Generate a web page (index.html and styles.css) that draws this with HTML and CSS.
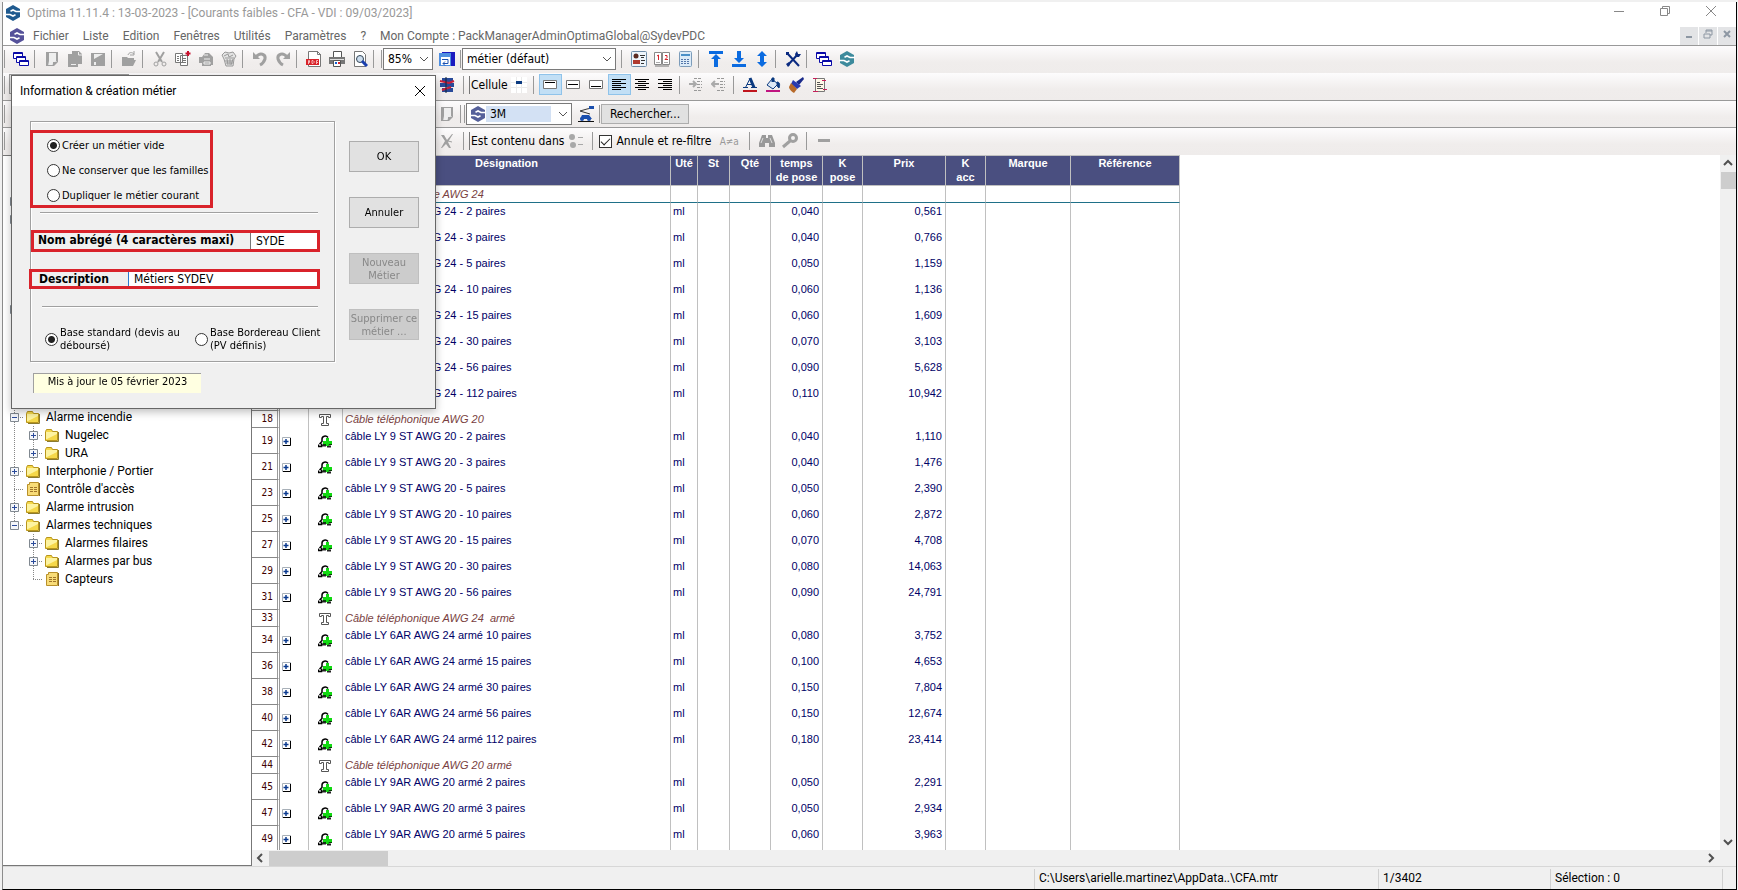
FILE: index.html
```html
<!DOCTYPE html>
<html lang="fr">
<head>
    <meta charset="UTF-8">
    <meta name="viewport" content="width=device-width, initial-scale=1.0">
    <title>Optima 11.11.4</title>
    <link rel="stylesheet" href="styles.css">
</head>
<body>
    <svg class="sprite" aria-hidden="true">
        <symbol id="logo" viewBox="0 0 16 16"><path d="M8 0l7 4v8l-7 4-7-4V4z" fill="currentColor"/><path d="M16 6.500h-5L8 5 5.500 6.200M0 9.500h5L8 11l2.500-1.200" fill="none" stroke="#fff" stroke-width="1.600"/></symbol>
        <symbol id="windows" viewBox="0 0 16 16"><g fill="#fff" stroke="#0a0aa8"><path d="M.5 1.500h9v6h-9zM.5 2.500h9"/><path d="M3.500 5.500h9v6h-9zM3.500 6.500h9"/><path d="M6.500 9.500h9v5h-9zM6.500 10.500h9"/></g></symbol>
        <symbol id="new" viewBox="0 0 16 16"><path d="M2.500 1.500h11v9l-4 4h-7z" fill="#eee" stroke="#a0a0a0"/><path d="M2 1h3v9l-1 5H2zM8 15c1-1 1-3 1-4 2 0 4 0 5-2v2l-4 4z" fill="#a0a0a0"/><path d="M13 1v9" stroke="#a0a0a0" stroke-width="2"/></symbol>
        <symbol id="pages" viewBox="0 0 16 16"><path d="M5 0h7l3 3v10h-4v3H1V3h4z" fill="#a0a0a0"/><path d="M4 13.500h5M11.500 1v3H15" stroke="#eee" fill="none"/></symbol>
        <symbol id="save" viewBox="0 0 16 16"><path d="M1 2h14v13H1z" fill="#a0a0a0"/><path d="M4 3h9L4 8zM4 11h2v3H4z" fill="#eee"/></symbol>
        <symbol id="open" viewBox="0 0 16 16"><path d="M1 6h5l1 1h6v2h2l-3 6H1z" fill="#a0a0a0"/><path d="M7 4c1-3 4-3 6-1M13 0v4H9" stroke="#a0a0a0" fill="none"/></symbol>
        <symbol id="cut" viewBox="0 0 16 16"><path d="M4 1l6 10M12 1L6 11" stroke="#a0a0a0" stroke-width="2" fill="none"/><circle cx="4" cy="13" r="2" fill="none" stroke="#a0a0a0"/><circle cx="12" cy="13" r="2" fill="none" stroke="#a0a0a0"/></symbol>
        <symbol id="copy" viewBox="0 0 16 16"><path d="M.5 2.500h7v9h-7zM5.500 4.500h7v10h-7z" fill="#fff" stroke="#777"/><path d="M2 5.500h2M2 7.500h2M2 9.500h2M7 7.500h4M7 9.500h4M7 11.500h4" stroke="#777"/><path d="M13 0v5M10.500 2.500h5" stroke="#c8102e" stroke-width="2"/></symbol>
        <symbol id="paste" viewBox="0 0 16 16"><path d="M1 6h3l3-4 4 0 4 4v8h-2v1H4v-3H1z" fill="#a0a0a0"/><path d="M6 8h6M6 11h6v2H6zM6 4h4" stroke="#eee" fill="none"/></symbol>
        <symbol id="trash" viewBox="0 0 16 16"><path d="M1 4l3-3 4 1 4-1 3 4-2 3-1 7H5L3 8z" fill="#e4e4e4" stroke="#999"/><path d="M3 5l4-2 1 3 4-2M4 7h9M6 8l1 6M9 8v6M12 8l-2 6M4 10h8M5 12h7" stroke="#999" fill="none"/></symbol>
        <symbol id="undo" viewBox="0 0 16 16"><path d="M4 6c4-5 10-3 9 2-1 3-3 5-5 6" stroke="#a0a0a0" stroke-width="3" fill="none"/><path d="M1 1v7h7z" fill="#a0a0a0"/></symbol>
        <symbol id="redo" viewBox="0 0 16 16"><path d="M12 6C8 1 2 3 3 8c1 3 3 5 5 6" stroke="#a0a0a0" stroke-width="3" fill="none"/><path d="M15 1v7H8z" fill="#a0a0a0"/></symbol>
        <symbol id="pdf" viewBox="0 0 16 16"><path d="M2.500.5h9l3 3v12h-12z" fill="#fff" stroke="#777"/><path d="M11.500 0v3.500H15" fill="none" stroke="#777"/><path d="M0 8h13v6H0z" fill="#d8232a"/><path d="M2.500 13V9.500h1v2h-1M6 12.500v-3h1l1 1v1l-1 1zM10.500 13V9.500H12M10.500 11.500H12" stroke="#f6b8ba" fill="none"/></symbol>
        <symbol id="print" viewBox="0 0 16 16"><path d="M4.500.5h8v6h-8z" fill="#fff" stroke="#555"/><path d="M0 6h16v7H0z" fill="#777"/><path d="M1 8.500h14" stroke="#ddd"/><path d="M4.500 9.500h7v6h-7z" fill="#fff" stroke="#555"/><path d="M6 12h2" stroke="#1560d0" stroke-width="2"/><path d="M9 12h2" stroke="#d8232a" stroke-width="2"/></symbol>
        <symbol id="preview" viewBox="0 0 16 16"><path d="M2.500.5h8l3 3v12h-11z" fill="#fff" stroke="#777"/><circle cx="8" cy="8" r="3.500" fill="#cde" stroke="#345"/><path d="M10 10l5 5" stroke="#1a3fae" stroke-width="3"/></symbol>
        <symbol id="disk" viewBox="0 0 16 16"><path d="M3 1h13v14H3z" fill="#1a1ac0"/><path d="M0 2h12v13H0z" fill="#4f8fe0"/><path d="M2 6h9v8H2z" fill="#fff"/><path d="M3 8.500h6v4H4l2-2M4 12.500l2 2" stroke="#1a50b0" fill="none"/></symbol>
        <symbol id="contact" viewBox="0 0 16 16"><rect x=".5" y=".5" width="15" height="15" rx="1" fill="#eef5fb" stroke="#6f8da8"/><circle cx="5" cy="5" r="2.500" fill="#5b2a20"/><path d="M2 13V9h7v4z" fill="#b03a30"/><path d="M9 4.500h5M10 6.500h3M10 9.500h4M10 12.500h3" stroke="#333"/></symbol>
        <symbol id="book" viewBox="0 0 16 16"><path d="M.5 1.500h7v12h-7zM8.500 1.500h7v12h-7z" fill="#fff" stroke="#888"/><path d="M1 15h14" stroke="#777"/><path d="M3 5l1.500-1v5M11 4.500h2v2l-2 2h3" stroke="#d8232a" fill="none"/><path d="M2 11.500h4M10 11.500h4" stroke="#aaa"/></symbol>
        <symbol id="calc" viewBox="0 0 16 16"><rect x="2.500" y=".5" width="12" height="15" rx="1" fill="#dcebf8" stroke="#7d9cba"/><path d="M4 3h9v2H4z" fill="#4a90c8"/><path d="M4 8.500h9M4 10.500h9M4 12.500h9" stroke="#57a" stroke-dasharray="2 1"/></symbol>
        <symbol id="top" viewBox="0 0 16 16"><path d="M1 0h14v3H1zM8 3l5 5h-3v8H6V8H3z" fill="#0b6be0"/></symbol>
        <symbol id="bottom" viewBox="0 0 16 16"><path d="M1 13h14v3H1zM8 12l5-5h-3V0H6v7H3z" fill="#0b6be0"/></symbol>
        <symbol id="updown" viewBox="0 0 16 16"><path d="M8 0l5 5h-3v6h3l-5 5-5-5h3V5H3z" fill="#0b6be0"/></symbol>
        <symbol id="tools" viewBox="0 0 16 16"><path d="M2 2l12 13M13 3L3 14" stroke="#0b2a80" stroke-width="2"/><path d="M1 1h3v3H1zM10 3l2-3 1 3 3 0-2 3h-3zM1 13l3-2 1 3-2 2z" fill="#0b2a80"/></symbol>
        <symbol id="fields" viewBox="0 0 16 16"><path d="M3 1h11v4H3zM1 6h14v4H1zM3 11h11v4H3z" fill="#284a9a"/><path d="M1 4l9 2 5-2M3 13l9-3" stroke="#c8203a" stroke-width="2" fill="none"/><path d="M7 0v16" stroke="#123"/></symbol>
        <symbol id="cell" viewBox="0 0 16 16"><path d="M0 0h16v16H0z" fill="#fff"/><path d="M0 5.500h16M0 10.500h16M5.500 0v16M10.500 0v16" stroke="#eaeaea"/><path d="M5 4h6v3H5z" fill="#0b3a80"/></symbol>
        <symbol id="valign-top" viewBox="0 0 16 16"><path d="M1.500 3.500h13v8h-13z" fill="#fff" stroke="#777"/><path d="M3 6l1-1 1 1 1-1 1 1 1-1 1 1 1-1 1 1 1-1 1 1" stroke="#000" fill="none"/></symbol>
        <symbol id="valign-mid" viewBox="0 0 16 16"><path d="M1.500 3.500h13v8h-13z" fill="#fff" stroke="#777"/><path d="M3 8l1-1 1 1 1-1 1 1 1-1 1 1 1-1 1 1 1-1 1 1" stroke="#000" fill="none"/></symbol>
        <symbol id="valign-bot" viewBox="0 0 16 16"><path d="M1.500 3.500h13v8h-13z" fill="#fff" stroke="#777"/><path d="M3 10l1-1 1 1 1-1 1 1 1-1 1 1 1-1 1 1 1-1 1 1" stroke="#000" fill="none"/></symbol>
        <symbol id="left" viewBox="0 0 16 16"><path d="M1 2.500h14M1 4.500h9M1 6.500h14M1 8.500h9M1 10.500h14M1 12.500h9" stroke="#000"/></symbol>
        <symbol id="center" viewBox="0 0 16 16"><path d="M1 2.500h14M4 4.500h8M1 6.500h14M4 8.500h8M1 10.500h14M4 12.500h8" stroke="#000"/></symbol>
        <symbol id="right" viewBox="0 0 16 16"><path d="M1 2.500h14M6 4.500h9M1 6.500h14M6 8.500h9M1 10.500h14M6 12.500h9" stroke="#000"/></symbol>
        <symbol id="indent" viewBox="0 0 16 16"><path d="M6 1.500h8M9 4.500h5M9 7.500h5M9 10.500h5M6 13.500h8" stroke="#999" stroke-dasharray="3 1"/><path d="M1 7h6M5 4l3 3-3 3" stroke="#aaa" stroke-width="2" fill="none"/></symbol>
        <symbol id="outdent" viewBox="0 0 16 16"><path d="M6 1.500h8M9 4.500h5M9 7.500h5M9 10.500h5M6 13.500h8" stroke="#999" stroke-dasharray="3 1"/><path d="M8 7H2M4 4L1 7l3 3" stroke="#aaa" stroke-width="2" fill="none"/></symbol>
        <symbol id="color" viewBox="0 0 16 16"><path d="M3.500 10.500L8 1.500M5 7.500h6M1 10.500h5M9 10.500h6" stroke="#0b3a80" fill="none"/><path d="M8 1l4 9.500" stroke="#0b3a80" stroke-width="3"/><path d="M1 13h14v2H1z" fill="#c0141c"/></symbol>
        <symbol id="fill" viewBox="0 0 16 16"><path d="M7 2l6 5-5 5-6-4z" fill="#dde8f5" stroke="#0b3a80"/><path d="M7 5V1h2v4M12 5c3 0 3 3 2 6-2-1-2-3-2-6z" fill="#0b3a80" stroke="#0b3a80"/><path d="M1 13h14v2H1z" fill="#c01480"/></symbol>
        <symbol id="brush" viewBox="0 0 16 16"><path d="M15 0l1 2-5 6-3-3z" fill="#1a2a8a"/><path d="M5 3l8 6-4 3-6-5z" fill="#2a3ab0"/><path d="M3 6l6 6-3 4c-2-1-5-4-5-6z" fill="#b86a2a"/></symbol>
        <symbol id="report" viewBox="0 0 16 16"><path d="M4.500 1.500h9v13h-9z" fill="#fff8e8" stroke="#777"/><path d="M2 1.500h4M11 3.500h4M2 14.500h5M12 12.500h4" stroke="#c8205a"/><path d="M6 5.500h3M6 7.500h6M6 9.500h4M6 11.500h6" stroke="#555"/></symbol>
        <symbol id="chart" viewBox="0 0 16 16"><path d="M14 2L9 3 2 5l10 3" stroke="#333" fill="none"/><path d="M11 0h5v3h-5zM4 9h7l3 4H2z" fill="#1a4fae"/><circle cx="4" cy="13" r="2" fill="#1a4fae"/><circle cx="11" cy="13" r="2" fill="#1a4fae"/><path d="M0 15.500h16" stroke="#111"/></symbol>
        <symbol id="nofilter" viewBox="0 0 16 16"><path d="M2 2h3l3 5 5-6h1L9 9l3 6h-2l-3-4-4 4H2l4-7z" fill="#a0a0a0"/><path d="M9 8l4 1" stroke="#a0a0a0"/></symbol>
        <symbol id="options" viewBox="0 0 16 16"><circle cx="4" cy="4" r="3" fill="#a8a8a8"/><circle cx="5" cy="12" r="3" fill="#a8a8a8"/><path d="M10 4.500h5M10 11.500h5" stroke="#a8a8a8"/></symbol>
        <symbol id="binoculars" viewBox="0 0 16 16"><path d="M3 2h4v3h2V2h4l3 8v4h-6v-4H6v4H0v-4z" fill="#999"/><path d="M4 5l-2 5M11 5l2 5" stroke="#ddd"/></symbol>
        <symbol id="key" viewBox="0 0 16 16"><circle cx="11" cy="5" r="3.500" fill="none" stroke="#a0a0a0" stroke-width="3"/><path d="M8 8l-7 6" stroke="#a0a0a0" stroke-width="3"/></symbol>
        <symbol id="minus" viewBox="0 0 16 16"><path d="M2 6h12v3H2z" fill="#a0a0a0"/></symbol>
        <symbol id="chevron" viewBox="0 0 10 10"><path d="M1 3l4 4 4-4" stroke="#555" fill="none"/></symbol>
        <symbol id="folder" viewBox="0 0 16 16"><path d="M1.500 4.500l1-2h5l1 2h5v9h-12z" fill="#f5d84a" stroke="#b8951c"/><path d="M2 5h11v2L3 12H2z" fill="#fdf3a0"/><path d="M14.500 5v9.500H3" stroke="#8a7a30" fill="none"/></symbol>
        <symbol id="sheet" viewBox="0 0 16 16"><path d="M2.500 3.500h2v-2h9v13h-11z" fill="#f8dc78" stroke="#b8902a"/><path d="M5 6.500h3M9 6.500h3M5 8.500h3M9 8.500h3M5 10.500h3M9 10.500h3" stroke="#a0742a"/><path d="M14.500 2v13" stroke="#8a6a20"/></symbol>
        <symbol id="heading" viewBox="0 0 14 14"><path d="M1.500 4.500v-3h11v3h-2v-1h-2v7h2v2h-7v-2h2v-7h-2v1z" fill="#fff" stroke="#555"/></symbol>
        <symbol id="article" viewBox="0 0 14 14"><path d="M.5 10.500v2h3v-3M1.500 10L4 7.500V5c0-3 4-4 6-1.500" stroke="#000" stroke-width="1.500" fill="none"/><path d="M4 11.500h4M9 12.500h4" stroke="#222" stroke-width="2"/><path d="M8 4h3v3h3v3h-3v2H8v-2H5V7h3z" fill="#12d912"/><path d="M5 10.500h3M11 11.500v-1h3" stroke="#064006" fill="none"/></symbol>
        <symbol id="plus" viewBox="0 0 9 9"><path d="M.5.5h8v8h-8z" fill="#f4f6fa" stroke="#808890"/><path d="M2 4.500h5M4.500 2v5" stroke="#2a4a9a"/></symbol>
        <symbol id="less" viewBox="0 0 9 9"><path d="M.5.5h8v8h-8z" fill="#f4f6fa" stroke="#808890"/><path d="M2 4.500h5" stroke="#2a4a9a"/></symbol>
        <symbol id="rowplus" viewBox="0 0 9 9"><path d="M.5.5h8v8h-8z" fill="#fff" stroke="#a8b0b8"/><path d="M8.500 1v7.500H1" stroke="#000" fill="none"/><path d="M1.500 4.500h5M4 2v5" stroke="#0a3a90" stroke-width="1.500"/></symbol>
        <symbol id="close" viewBox="0 0 12 12"><path d="M1 1l10 10M11 1L1 11" stroke="currentColor" fill="none"/></symbol>
        <symbol id="restore" viewBox="0 0 12 12"><path d="M1.500 3.500h7v7h-7zM3.500 3V1.500h7v7H9" stroke="currentColor" fill="none"/></symbol>
        <symbol id="minimize" viewBox="0 0 12 12"><path d="M1 6.500h10" stroke="currentColor"/></symbol>
    </svg>

    <div class="window">
        <header class="titlebar">
            <svg class="logo"><use href="#logo"/></svg>
            <h1>Optima 11.11.4 : 13-03-2023 - [Courants faibles - CFA - VDI : 09/03/2023]</h1>
            <div class="window-buttons">
                <button aria-label="Réduire"><svg><use href="#minimize"/></svg></button>
                <button aria-label="Restaurer"><svg><use href="#restore"/></svg></button>
                <button aria-label="Fermer"><svg><use href="#close"/></svg></button>
            </div>
        </header>

        <nav class="menubar">
            <svg class="logo violet"><use href="#logo"/></svg>
            <a href="#">Fichier</a>
            <a href="#">Liste</a>
            <a href="#">Edition</a>
            <a href="#">Fenêtres</a>
            <a href="#">Utilités</a>
            <a href="#">Paramètres</a>
            <a href="#">?</a>
            <a href="#">Mon Compte : PackManagerAdminOptimaGlobal@SydevPDC</a>
            <div class="mdi-buttons">
                <button aria-label="Réduire la liste"><svg><path d="M3 9h6" stroke-width="2"/></svg></button>
                <button aria-label="Restaurer la liste"><svg><path d="M2 6h6v4H2zM4 5V2h6v5H8M4 3h6" /></svg></button>
                <button aria-label="Fermer la liste"><svg><path d="M3 3l6 6M9 3l-6 6" stroke-width="2"/></svg></button>
            </div>
        </nav>

        <div class="toolbar">
            <span class="grip"></span>
            <button class="tool" aria-label="Fenêtres"><svg><use href="#windows"/></svg></button>
            <span class="sep"></span>
            <button class="tool" aria-label="Nouveau"><svg><use href="#new"/></svg></button>
            <button class="tool" aria-label="Dupliquer"><svg><use href="#pages"/></svg></button>
            <button class="tool" aria-label="Enregistrer"><svg><use href="#save"/></svg></button>
            <span class="sep"></span>
            <button class="tool" aria-label="Ouvrir"><svg><use href="#open"/></svg></button>
            <span class="sep"></span>
            <button class="tool" aria-label="Couper"><svg><use href="#cut"/></svg></button>
            <button class="tool" aria-label="Copier"><svg><use href="#copy"/></svg></button>
            <button class="tool" aria-label="Coller"><svg><use href="#paste"/></svg></button>
            <button class="tool" aria-label="Supprimer"><svg><use href="#trash"/></svg></button>
            <span class="sep"></span>
            <button class="tool" aria-label="Annuler l'action"><svg><use href="#undo"/></svg></button>
            <button class="tool" aria-label="Rétablir"><svg><use href="#redo"/></svg></button>
            <span class="sep"></span>
            <button class="tool" aria-label="PDF"><svg><use href="#pdf"/></svg></button>
            <button class="tool" aria-label="Imprimer"><svg><use href="#print"/></svg></button>
            <button class="tool" aria-label="Aperçu"><svg><use href="#preview"/></svg></button>
            <span class="sep"></span>
            <span class="sep tight"></span>
            <div class="combo zoom">
                <select aria-label="Zoom"><option>85%</option></select>
                <svg><use href="#chevron"/></svg>
            </div>
            <button class="tool" aria-label="Enregistrer la vue"><svg><use href="#disk"/></svg></button>
            <span class="sep tight"></span>
            <div class="combo view">
                <select aria-label="Vue"><option>métier (défaut)</option></select>
                <svg><use href="#chevron"/></svg>
            </div>
            <span class="sep wide"></span>
            <button class="tool" aria-label="Contacts"><svg><use href="#contact"/></svg></button>
            <button class="tool" aria-label="Catalogue"><svg><use href="#book"/></svg></button>
            <button class="tool" aria-label="Calculatrice"><svg><use href="#calc"/></svg></button>
            <span class="sep"></span>
            <button class="tool" aria-label="Début"><svg><use href="#top"/></svg></button>
            <button class="tool" aria-label="Fin"><svg><use href="#bottom"/></svg></button>
            <button class="tool" aria-label="Hauteur"><svg><use href="#updown"/></svg></button>
            <span class="sep"></span>
            <button class="tool" aria-label="Outils"><svg><use href="#tools"/></svg></button>
            <span class="sep"></span>
            <button class="tool" aria-label="Cascade"><svg><use href="#windows"/></svg></button>
            <button class="tool" aria-label="Sydev"><svg class="teal"><use href="#logo"/></svg></button>
        </div>

        <div class="toolbar ruled">
            <span class="grip"></span>
            <span class="covered"><button class="style-button" aria-label="Style"></button></span>
            <button class="tool" aria-label="Champs"><svg><use href="#fields"/></svg></button>
            <span class="sep wide"></span>
            <span class="tool-label">Cellule</span>
            <button class="tool" aria-label="Cellule"><svg><use href="#cell"/></svg></button>
            <span class="sep"></span>
            <button class="tool active" aria-label="Haut"><svg><use href="#valign-top"/></svg></button>
            <button class="tool" aria-label="Milieu"><svg><use href="#valign-mid"/></svg></button>
            <button class="tool" aria-label="Bas"><svg><use href="#valign-bot"/></svg></button>
            <button class="tool active" aria-label="Gauche"><svg><use href="#left"/></svg></button>
            <button class="tool" aria-label="Centre"><svg><use href="#center"/></svg></button>
            <button class="tool" aria-label="Droite"><svg><use href="#right"/></svg></button>
            <span class="sep"></span>
            <button class="tool" aria-label="Augmenter le retrait"><svg><use href="#indent"/></svg></button>
            <button class="tool" aria-label="Diminuer le retrait"><svg><use href="#outdent"/></svg></button>
            <span class="sep"></span>
            <button class="tool" aria-label="Couleur du texte"><svg><use href="#color"/></svg></button>
            <button class="tool" aria-label="Couleur de fond"><svg><use href="#fill"/></svg></button>
            <button class="tool" aria-label="Reproduire"><svg><use href="#brush"/></svg></button>
            <button class="tool" aria-label="Rapport"><svg><use href="#report"/></svg></button>
        </div>

        <div class="toolbar ruled">
            <span class="grip"></span>
            <span class="covered"></span>
            <button class="tool" aria-label="Nouvelle page"><svg><use href="#new"/></svg></button>
            <span class="sep tight"></span>
            <span class="sep tight"></span>
            <div class="combo brand">
                <svg class="brand-logo"><use href="#logo"/></svg>
                <select aria-label="Fournisseur"><option>3M</option></select>
                <svg><use href="#chevron"/></svg>
            </div>
            <button class="tool" aria-label="Graphique"><svg><use href="#chart"/></svg></button>
            <span class="sep tight"></span>
            <button class="search-button">Rechercher...</button>
        </div>

        <div class="toolbar">
            <span class="grip"></span>
            <span class="covered"></span>
            <button class="tool" aria-label="Retirer le filtre"><svg><use href="#nofilter"/></svg></button>
            <span class="sep wide"></span>
            <span class="tool-label">Est contenu dans</span>
            <button class="tool" aria-label="Options du filtre"><svg><use href="#options"/></svg></button>
            <span class="sep wide"></span>
            <label class="check"><input type="checkbox" checked>Annule et re-filtre</label>
            <button class="tool case">A≠a</button>
            <span class="sep"></span>
            <button class="tool" aria-label="Rechercher"><svg><use href="#binoculars"/></svg></button>
            <button class="tool" aria-label="Clé"><svg><use href="#key"/></svg></button>
            <span class="sep wide"></span>
            <button class="tool" aria-label="Retirer"><svg><use href="#minus"/></svg></button>
        </div>

        <main class="content">
            <aside class="tree" id="tree"></aside>

            <section class="grid">
                <div class="grid-row">
                    <div class="grid-view">
                        <table>
                            <colgroup>
                                <col class="c-num"><col class="c-exp"><col class="c-type"><col class="c-name"><col class="c-unit">
                                <col class="c-st"><col class="c-qty"><col class="c-time"><col class="c-k"><col class="c-price">
                                <col class="c-k"><col class="c-brand"><col class="c-ref">
                            </colgroup>
                            <thead>
                                <tr>
                                    <th></th><th></th><th></th><th>Désignation</th><th>Uté</th><th>St</th><th>Qté</th>
                                    <th>temps<br>de pose</th><th>K<br>pose</th><th>Prix</th><th>K<br>acc</th><th>Marque</th><th>Référence</th>
                                </tr>
                            </thead>
                            <tbody id="rows"></tbody>
                        </table>
                    </div>
                    <div class="vscroll">
                        <svg><path d="M1 7l4-4 4 4"/></svg>
                        <span class="thumb"></span>
                        <svg class="end"><path d="M1 3l4 4 4-4"/></svg>
                    </div>
                </div>
                <div class="hscroll">
                    <svg><path d="M7 1L3 5l4 4"/></svg>
                    <span class="thumb"></span>
                    <svg class="end"><path d="M3 1l4 4-4 4"/></svg>
                </div>
            </section>
        </main>

        <footer class="statusbar">
            <span class="path">C:\Users\arielle.martinez\AppData..\CFA.mtr</span>
            <span class="count">1/3402</span>
            <span class="count">Sélection : 0</span>
            <span class="corner"></span>
        </footer>
    </div>

    <form class="dialog" role="dialog" aria-labelledby="dialogTitle">
        <div class="dialog-title">
            <h2 id="dialogTitle">Information &amp; création métier</h2>
            <button type="button" aria-label="Fermer la fenêtre"><svg><use href="#close"/></svg></button>
        </div>
        <div class="dialog-body">
            <div class="dialog-main">
                <div class="group">
                    <div class="marked modes">
                        <label><input type="radio" name="mode" checked>Créer un métier vide</label>
                        <label><input type="radio" name="mode">Ne conserver que les familles</label>
                        <label><input type="radio" name="mode">Dupliquer le métier courant</label>
                    </div>
                    <hr>
                    <div class="marked field short">
                        <label for="shortName">Nom abrégé (4 caractères maxi)</label>
                        <input type="text" id="shortName" value="SYDE" maxlength="4">
                    </div>
                    <div class="marked field long">
                        <label for="description">Description</label>
                        <input type="text" id="description" value="Métiers SYDEV">
                    </div>
                    <hr>
                    <div class="bases">
                        <label><input type="radio" name="base" checked><span>Base standard (devis au déboursé)</span></label>
                        <label><input type="radio" name="base"><span>Base Bordereau Client (PV définis)</span></label>
                    </div>
                </div>
                <p class="updated">Mis à jour le 05 février 2023</p>
            </div>
            <div class="dialog-buttons">
                <button type="button">OK</button>
                <button type="button">Annuler</button>
                <button type="button" disabled>Nouveau Métier</button>
                <button type="button" disabled>Supprimer ce métier ...</button>
            </div>
        </div>
    </form>

    <script>
        const tree = document.getElementById('tree');
        const rows = document.getElementById('rows');

        // level, expander, icon, label
        const nodes = [
            [0, '', '', ''], [0, '', '', ''], [0, 'plus', '', ''], [0, 'plus', '', ''], [0, '', '', ''],
            [0, '', '', ''], [0, '', '', ''], [0, '', '', ''], [0, 'plus', '', ''], [0, '', '', ''],
            [0, '', '', ''], [0, '', '', ''], [0, '', '', ''], [0, '', '', ''],
            [0, 'less', 'folder', 'Alarme incendie'],
            [1, 'plus', 'folder', 'Nugelec'],
            [1, 'plus', 'folder', 'URA'],
            [0, 'plus', 'folder', 'Interphonie / Portier'],
            [0, '', 'sheet', "Contrôle d'accès"],
            [0, 'plus', 'folder', 'Alarme intrusion'],
            [0, 'less', 'folder', 'Alarmes techniques', 'last'],
            [1, 'plus', 'folder', 'Alarmes filaires', '', 'blank'],
            [1, 'plus', 'folder', 'Alarmes par bus', '', 'blank'],
            [1, '', 'sheet', 'Capteurs', 'last', 'blank']
        ];

        nodes.forEach(([level, expander, icon, label, last = '', parent = '']) => {
            let html = '';
            if (level) html += `<span class="branch ${parent}"></span>`;
            html += `<span class="branch node ${last}">`;
            if (expander) html += `<svg><use href="#${expander}"/></svg>`;
            html += '</span>';
            if (icon) html += `<svg class="node-icon"><use href="#${icon}"/></svg><a href="#">${label}</a>`;
            tree.insertAdjacentHTML('beforeend', `<div class="tree-row">${html}</div>`);
        });

        // number, designation, time, price (no time: title row)
        const items = [
            [1, 'Câble téléphonique AWG 24'],
            [2, 'câble LY 9 ST AWG 24 - 2 paires', '0,040', '0,561'],
            [4, 'câble LY 9 ST AWG 24 - 3 paires', '0,040', '0,766'],
            [6, 'câble LY 9 ST AWG 24 - 5 paires', '0,050', '1,159'],
            [8, 'câble LY 9 ST AWG 24 - 10 paires', '0,060', '1,136'],
            [10, 'câble LY 9 ST AWG 24 - 15 paires', '0,060', '1,609'],
            [12, 'câble LY 9 ST AWG 24 - 30 paires', '0,070', '3,103'],
            [14, 'câble LY 9 ST AWG 24 - 56 paires', '0,090', '5,628'],
            [16, 'câble LY 9 ST AWG 24 - 112 paires', '0,110', '10,942'],
            [18, 'Câble téléphonique AWG 20'],
            [19, 'câble LY 9 ST AWG 20 - 2 paires', '0,040', '1,110'],
            [21, 'câble LY 9 ST AWG 20 - 3 paires', '0,040', '1,476'],
            [23, 'câble LY 9 ST AWG 20 - 5 paires', '0,050', '2,390'],
            [25, 'câble LY 9 ST AWG 20 - 10 paires', '0,060', '2,872'],
            [27, 'câble LY 9 ST AWG 20 - 15 paires', '0,070', '4,708'],
            [29, 'câble LY 9 ST AWG 20 - 30 paires', '0,080', '14,063'],
            [31, 'câble LY 9 ST AWG 20 - 56 paires', '0,090', '24,791'],
            [33, 'Câble téléphonique AWG 24&nbsp; armé'],
            [34, 'câble LY 6AR AWG 24 armé 10 paires', '0,080', '3,752'],
            [36, 'câble LY 6AR AWG 24 armé 15 paires', '0,100', '4,653'],
            [38, 'câble LY 6AR AWG 24 armé 30 paires', '0,150', '7,804'],
            [40, 'câble LY 6AR AWG 24 armé 56 paires', '0,150', '12,674'],
            [42, 'câble LY 6AR AWG 24 armé 112 paires', '0,180', '23,414'],
            [44, 'Câble téléphonique AWG 20 armé'],
            [45, 'câble LY 9AR AWG 20 armé 2 paires', '0,050', '2,291'],
            [47, 'câble LY 9AR AWG 20 armé 3 paires', '0,050', '2,934'],
            [49, 'câble LY 9AR AWG 20 armé 5 paires', '0,060', '3,963']
        ];

        items.forEach(([num, name, time, price]) => {
            const article = time !== undefined;
            rows.insertAdjacentHTML('beforeend', `<tr class="${article ? 'article' : 'title'}">
                <td class="num">${num}</td>
                <td class="exp">${article ? '<svg><use href="#rowplus"/></svg>' : ''}</td>
                <td class="type"><svg><use href="#${article ? 'article' : 'heading'}"/></svg></td>
                <td>${name}</td><td>${article ? 'ml' : ''}</td><td></td><td></td>
                <td class="right">${time || ''}</td><td></td><td class="right">${price || ''}</td>
                <td></td><td></td><td></td>
            </tr>`);
        });

        const description = document.getElementById('description');
        description.focus();
        description.setSelectionRange(13, 13);
    </script>
</body>
</html>
```
FILE: styles.css
```css
* {
    box-sizing: border-box;
    margin: 0;
    padding: 0;
}
body {
    height: 100vh;
    overflow: hidden;
    padding: 2px 1px 0 2px;
    background: #f0f0f0;
    font-family: "DejaVu Sans Condensed", "DejaVu Sans", sans-serif;
    font-size: 12px;
    color: #000;
}
button, input, select {
    font: inherit;
    color: inherit;
}
button {
    border: none;
    background: none;
}
a {
    color: inherit;
    text-decoration: none;
}
.sprite {
    position: absolute;
    width: 0;
    height: 0;
}
.window {
    display: flex;
    flex-direction: column;
    height: 100%;
    background: #f0f0f0;
    border-left: 1px solid #8c8c8c;
    border-right: 1px solid #000;
    border-bottom: 1px solid #000;
}

/* title and menu */
.titlebar, .menubar {
    display: flex;
    align-items: center;
    background: #fff;
    font-family: Roboto, sans-serif;
}
.titlebar {
    height: 24px;
    padding: 0 2px 2px;
    color: #999;
}
.titlebar h1 {
    margin-left: 6px;
    font-size: 12px;
    font-weight: normal;
}
.logo {
    width: 16px;
    height: 16px;
    color: #1f5a8f;
}
.logo.violet {
    margin-right: 8px;
    color: #55519a;
}
.teal {
    color: #3d8a9c;
}
.window-buttons {
    display: flex;
    align-self: flex-start;
    margin-left: auto;
}
.window-buttons button {
    width: 46px;
    height: 20px;
    color: #888;
}
.window-buttons svg {
    width: 12px;
    height: 12px;
}
.menubar {
    height: 19px;
    padding-left: 6px;
    color: #666;
}
.menubar a {
    margin-right: 14px;
}
.mdi-buttons {
    display: flex;
    gap: 1px;
    margin-left: auto;
}
.mdi-buttons button {
    width: 18px;
    height: 18px;
    background: #e3e4e6;
}
.mdi-buttons svg {
    width: 12px;
    height: 12px;
    fill: none;
    stroke: #8d97a3;
}

/* toolbars */
.toolbar {
    display: flex;
    align-items: center;
    height: 27px;
    padding-bottom: 1px;
    background: linear-gradient(#fdfcfd, #f0edec 60%, #efeceb);
}
.menubar + .toolbar {
    height: 28px;
    padding-bottom: 2px;
    border-top: 1px solid #999;
}
.toolbar.ruled {
    border-bottom: 1px solid #999;
}
.menubar + .toolbar + .toolbar {
    height: 28px;
    padding-bottom: 4px;
}
.grip, .sep {
    flex: none;
    width: 1px;
    height: 18px;
    background: #999;
}
.grip {
    margin: 0 4px 0 1px;
}
.sep {
    margin: 0 5px 0 2px;
}
.sep.tight {
    margin: 0 1px 0 2px;
}
.sep.wide {
    margin: 0 5px;
}
.tool {
    flex: none;
    display: flex;
    align-items: center;
    justify-content: center;
    width: 23px;
    height: 21px;
}
.tool svg {
    width: 16px;
    height: 16px;
}
.tool.active {
    background: #c2dff5;
    border: 1px solid #8fc3ea;
}
.tool.case {
    width: 36px;
    color: #999;
    font-size: 10px;
}
.covered {
    flex: none;
    width: 426px;
}
.style-button {
    width: 120px;
    height: 20px;
    border: 1px solid #999;
    background: #e4e4e4;
}
.tool-label {
    padding-left: 1px;
    border-left: 1px solid #777;
    line-height: 18px;
    white-space: nowrap;
}
.combo {
    position: relative;
    display: flex;
    align-items: center;
    height: 22px;
    margin-right: 2px;
    background: #fff;
    border: 1px solid #7a7a7a;
}
.combo select {
    flex: 1;
    height: 18px;
    padding-left: 4px;
    border: none;
    background: none;
    appearance: none;
}
.combo svg:last-child {
    position: absolute;
    right: 3px;
    width: 10px;
    height: 10px;
    pointer-events: none;
}
.combo.zoom {
    width: 50px;
}
.combo.view {
    width: 154px;
    margin-right: 0;
}
.combo.brand {
    width: 106px;
    padding: 0 20px 0 3px;
}
.combo.brand select {
    height: 16px;
    background: #d3e1f4;
}
.brand-logo {
    width: 16px;
    height: 16px;
    color: #55609a;
}
.search-button {
    width: 88px;
    height: 20px;
    background: #e1e1e1;
    border: 1px solid #adadad;
}
.check {
    display: flex;
    align-items: center;
    gap: 4px;
    margin-left: 1px;
    white-space: nowrap;
}
.check input {
    width: 13px;
    height: 13px;
    appearance: none;
    border: 1px solid #333;
    background: #fff;
}
.check input:checked::before {
    content: "";
    display: block;
    width: 8px;
    height: 4px;
    margin: 2px 0 0 1px;
    border: solid #222;
    border-width: 0 0 1px 1px;
    transform: rotate(-45deg);
}

/* tree */
.content {
    flex: 1;
    min-height: 0;
    display: flex;
}
.tree {
    flex: none;
    width: 249px;
    padding-left: 2px;
    overflow: hidden;
    background: #fff;
    border: 1px solid #777;
    border-left: none;
    font-family: Roboto, sans-serif;
}
.tree-row {
    display: flex;
    align-items: center;
    height: 18px;
}
.tree-row a {
    line-height: 16px;
}
.branch {
    flex: none;
    display: flex;
    align-items: center;
    justify-content: center;
    width: 19px;
    height: 18px;
    background: repeating-linear-gradient(#888 0 1px, transparent 1px 2px) 9px 0 / 1px 100% no-repeat;
}
.branch.node {
    background:
        repeating-linear-gradient(#888 0 1px, transparent 1px 2px) 9px 0 / 1px 100% no-repeat,
        repeating-linear-gradient(90deg, #888 0 1px, transparent 1px 2px) 9px 9px / 10px 1px no-repeat;
}
.branch.last {
    background-size: 1px 50%, 10px 1px;
}
.branch.blank {
    background: none;
}
.branch svg {
    width: 9px;
    height: 9px;
}
.node-icon {
    width: 16px;
    height: 16px;
    margin: 0 5px 0 1px;
}

/* list */
.grid {
    flex: 1;
    min-width: 0;
    display: flex;
    flex-direction: column;
}
.grid-row {
    flex: 1;
    min-height: 0;
    display: flex;
}
.grid-view {
    flex: 1;
    overflow: hidden;
    background: #fff;
}
table {
    table-layout: fixed;
    width: 928px;
    border-collapse: separate;
    border-spacing: 0;
    font-family: "Liberation Sans", Arial, sans-serif;
    font-size: 11px;
    color: #000066;
}
.c-num { width: 28px; }
.c-exp { width: 29px; }
.c-type { width: 34px; }
.c-name { width: 328px; }
.c-unit { width: 27px; }
.c-st { width: 32px; }
.c-qty { width: 41px; }
.c-time { width: 52px; }
.c-k { width: 40px; }
.c-price { width: 83px; }
.c-brand { width: 85px; }
.c-ref { width: 109px; }
th {
    height: 31px;
    vertical-align: top;
    background: #4a4f80;
    border: solid #c0c0c0;
    border-width: 1px 1px 1px 0;
    color: #fff;
    line-height: 14px;
}
td {
    height: 26px;
    padding: 0 3px 0 2px;
    vertical-align: top;
    border-right: 1px solid #c0c0c0;
    line-height: 16px;
    white-space: nowrap;
}
.title td {
    height: 17px;
    color: #7a3f3f;
    font-style: italic;
}
tbody tr:first-child td {
    border-bottom: 1px solid #1f7088;
}
td.num {
    padding-right: 4px;
    vertical-align: middle;
    text-align: right;
    border-right: 3px double #999;
    border-bottom: 1px solid #888;
    font-family: "DejaVu Sans Condensed", "DejaVu Sans", sans-serif;
    font-size: 10px;
    font-style: normal;
    line-height: 14px;
    color: #400000;
}
td.exp, td.type {
    vertical-align: middle;
    line-height: 0;
}
td.type {
    text-align: center;
}
.exp svg {
    width: 9px;
    height: 9px;
}
.type svg {
    width: 14px;
    height: 14px;
}
td.right {
    text-align: right;
}

/* scrollbars */
.vscroll, .hscroll {
    flex: none;
    display: flex;
    align-items: center;
    background: #f0f0f0;
}
.vscroll {
    flex-direction: column;
    width: 16px;
    padding: 3px 0;
}
.hscroll {
    height: 16px;
    padding: 0 20px 0 3px;
}
.vscroll svg, .hscroll svg {
    width: 10px;
    height: 10px;
    fill: none;
    stroke: #505050;
    stroke-width: 2;
}
.vscroll .thumb {
    width: 15px;
    height: 17px;
    margin-top: 4px;
    background: #cdcdcd;
}
.hscroll .thumb {
    width: 119px;
    height: 15px;
    margin-left: 4px;
    background: #cdcdcd;
}
.vscroll .end {
    margin-top: auto;
}
.hscroll .end {
    margin-left: auto;
}

/* status bar */
.statusbar {
    flex: none;
    display: flex;
    justify-content: flex-end;
    height: 23px;
    padding-top: 2px;
    border-top: 1px solid #d7d7d7;
    font-family: Roboto, sans-serif;
}
.statusbar span {
    padding-left: 4px;
    border-left: 1px solid #d0d0d0;
    line-height: 19px;
}
.path { width: 344px; }
.count { width: 172px; }
.corner { width: 14px; }

/* dialog */
.dialog {
    position: absolute;
    left: 11px;
    top: 75px;
    width: 425px;
    background: #f0f0f0;
    border: 1px solid #666;
    font-size: 11px;
    box-shadow: 0 3px 8px rgba(0, 0, 0, 0.25);
}
.dialog-title {
    display: flex;
    justify-content: space-between;
    align-items: center;
    height: 30px;
    padding: 0 9px 0 8px;
    background: #fff;
}
.dialog-title h2 {
    font-family: Roboto, sans-serif;
    font-size: 12px;
    font-weight: normal;
}
.dialog-title button, .dialog-title svg {
    width: 12px;
    height: 12px;
}
.dialog-body {
    display: flex;
    justify-content: space-between;
    padding: 15px 16px 15px 18px;
}
.group {
    width: 305px;
    height: 241px;
    padding-top: 8px;
    border: 1px solid #a0a0a0;
    box-shadow: 1px 1px 0 #fff, inset 1px 1px 0 #fff;
}
.group hr {
    margin: 4px 16px 16px 9px;
    border: none;
    border-top: 1px solid #a0a0a0;
    border-bottom: 1px solid #fff;
}
.marked {
    border: 3px solid #d9232b;
}
.marked.modes {
    width: 183px;
    height: 78px;
    margin-left: -1px;
    padding-left: 14px;
}
.modes label {
    display: flex;
    align-items: center;
    gap: 2px;
    height: 25px;
    white-space: nowrap;
}
.group input[type="radio"] {
    flex: none;
    width: 13px;
    height: 13px;
    appearance: none;
    background: #fff;
    border: 1px solid #333;
    border-radius: 50%;
}
.group input[type="radio"]:checked {
    background: radial-gradient(circle, #222 0 3px, #fff 4px);
}
.field {
    display: flex;
    width: 289px;
    height: 22px;
    margin-bottom: 17px;
    font-size: 12px;
}
.field label {
    padding-left: 4px;
    font-weight: bold;
    line-height: 15px;
    white-space: nowrap;
}
.field input {
    margin-left: auto;
    padding-left: 5px;
    border: none;
    border-left: 1px solid #777;
    outline: none;
}
.field.short input {
    width: 67px;
}
.field.long {
    width: 291px;
    height: 20px;
    margin: 0 0 17px -2px;
    padding-left: 3px;
}
.field.long input {
    width: 189px;
    border-left-color: #2a7ad0;
}
.field.long + hr {
    margin: 0 16px 18px 11px;
}
.bases {
    display: flex;
    gap: 15px;
    padding-left: 14px;
}
.bases label {
    display: flex;
    align-items: center;
    gap: 2px;
    width: 135px;
    line-height: 13px;
}
.updated {
    width: 168px;
    height: 20px;
    margin: 11px 0 0 3px;
    background: #ffffe1;
    border: solid #a0a0a0;
    border-width: 1px 0 0 1px;
    text-align: center;
    line-height: 16px;
}
.dialog-buttons {
    display: flex;
    flex-direction: column;
    gap: 25px;
    padding-top: 20px;
}
.dialog-buttons button {
    width: 70px;
    height: 31px;
    background: #e1e1e1;
    border: 1px solid #adadad;
    line-height: 13px;
}
.dialog-buttons button:disabled {
    background: #ccc;
    border-color: #bfbfbf;
    color: #888;
}
```
